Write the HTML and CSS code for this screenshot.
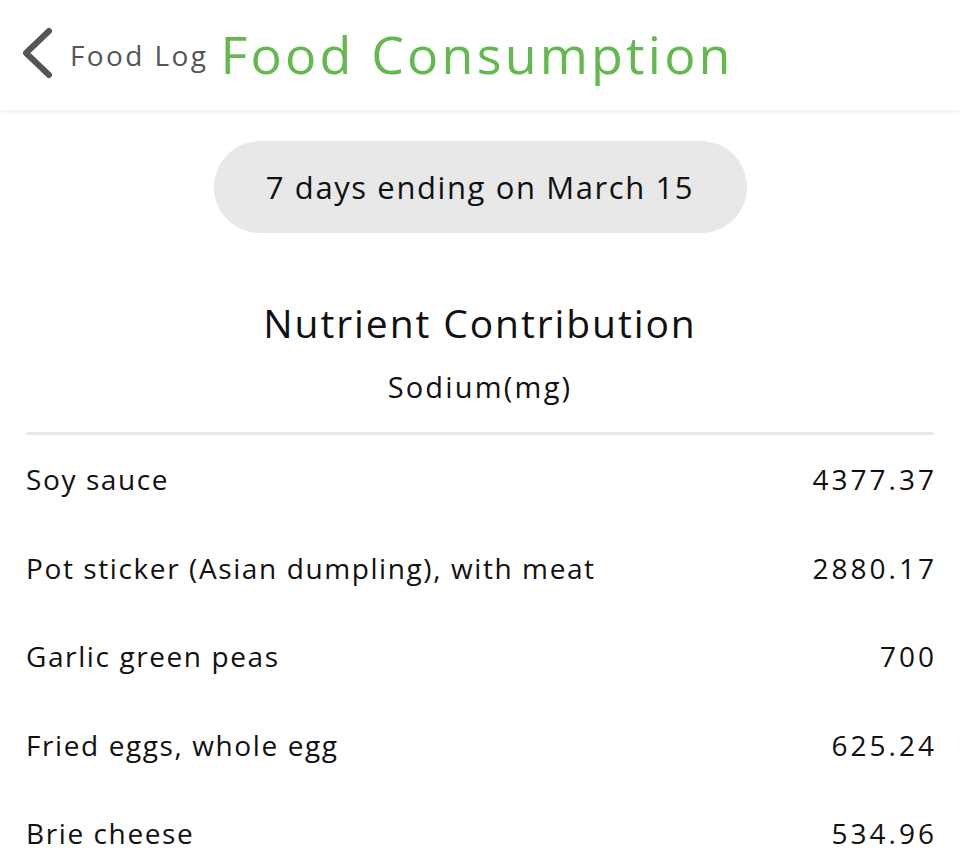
FILE: index.html
```html
<!DOCTYPE html>
<html lang="en">
<head>
  <meta charset="UTF-8" />
  <meta name="viewport" content="width=device-width, initial-scale=1.0"/>
  <title>Food Consumption</title>
  <link rel="stylesheet" href="styles.css">
</head>
<body>
  <header class="topbar">
    <a class="back" href="#">
      <svg class="chevron" width="34" height="52" viewBox="0 0 34 52">
        <path d="M29 4 L6 26 L29 48" fill="none" stroke="#555" stroke-width="6" stroke-linecap="round" stroke-linejoin="round"/>
      </svg>
      <span class="back-label">Food Log</span>
    </a>
    <h1 class="title">Food Consumption</h1>
  </header>

  <main class="content">
    <div class="range-pill">7 days ending on March 15</div>

    <h2 class="section-title">Nutrient Contribution</h2>
    <div class="section-sub">Sodium(mg)</div>

    <ul class="food-list">
      <li><span>Soy sauce</span><span class="amount">4377.37</span></li>
      <li><span>Pot sticker (Asian dumpling), with meat</span><span class="amount">2880.17</span></li>
      <li><span>Garlic green peas</span><span class="amount">700</span></li>
      <li><span>Fried eggs, whole egg</span><span class="amount">625.24</span></li>
      <li><span>Brie cheese</span><span class="amount">534.96</span></li>
    </ul>
  </main>
</body>
</html>
```

FILE: styles.css
```css
body {
  margin: 0;
  font-family: 'Open Sans', 'Noto Sans', sans-serif;
  background: #fff;
  color: #111;
  overflow: hidden;
}

.topbar {
  height: 110px;
  display: flex;
  align-items: center;
  padding: 0 20px;
  box-sizing: border-box;
  box-shadow: 0 2px 6px rgba(0, 0, 0, 0.08);
  position: relative;
}

.back {
  display: flex;
  align-items: center;
  text-decoration: none;
  margin-right: 12px;
}

.chevron {
  display: block;
  margin-top: -4px;
}

.back-label {
  margin-left: 16px;
  font-size: 28px;
  color: #555;
  letter-spacing: 2.4px;
}

.title {
  margin: -4px 0 0;
  font-size: 52px;
  font-weight: 400;
  color: #63b94f;
  letter-spacing: 3.2px;
}

.content {
  padding: 31px 26px 0;
  display: flex;
  flex-direction: column;
  align-items: center;
}

.range-pill {
  width: 533px;
  height: 92px;
  border-radius: 46px;
  background: #e8e8e8;
  display: flex;
  align-items: center;
  justify-content: center;
  font-size: 31px;
  letter-spacing: 1.6px;
  color: #111;
}

.section-title {
  margin: 66px 0 0;
  font-size: 39px;
  font-weight: 400;
  letter-spacing: 1.9px;
  line-height: 48px;
}

.section-sub {
  margin-top: 22px;
  font-size: 29px;
  letter-spacing: 2.2px;
  line-height: 36px;
}

.food-list {
  list-style: none;
  margin: 27px 0 0;
  padding: 0;
  width: 100%;
  border-top: 3px solid #e8e8e8;
}

.food-list li {
  display: flex;
  justify-content: space-between;
  align-items: center;
  height: 88.5px;
  font-size: 28px;
  letter-spacing: 1.6px;
}

.food-list .amount {
  letter-spacing: 3px;
  margin-right: -3px;
}
```
